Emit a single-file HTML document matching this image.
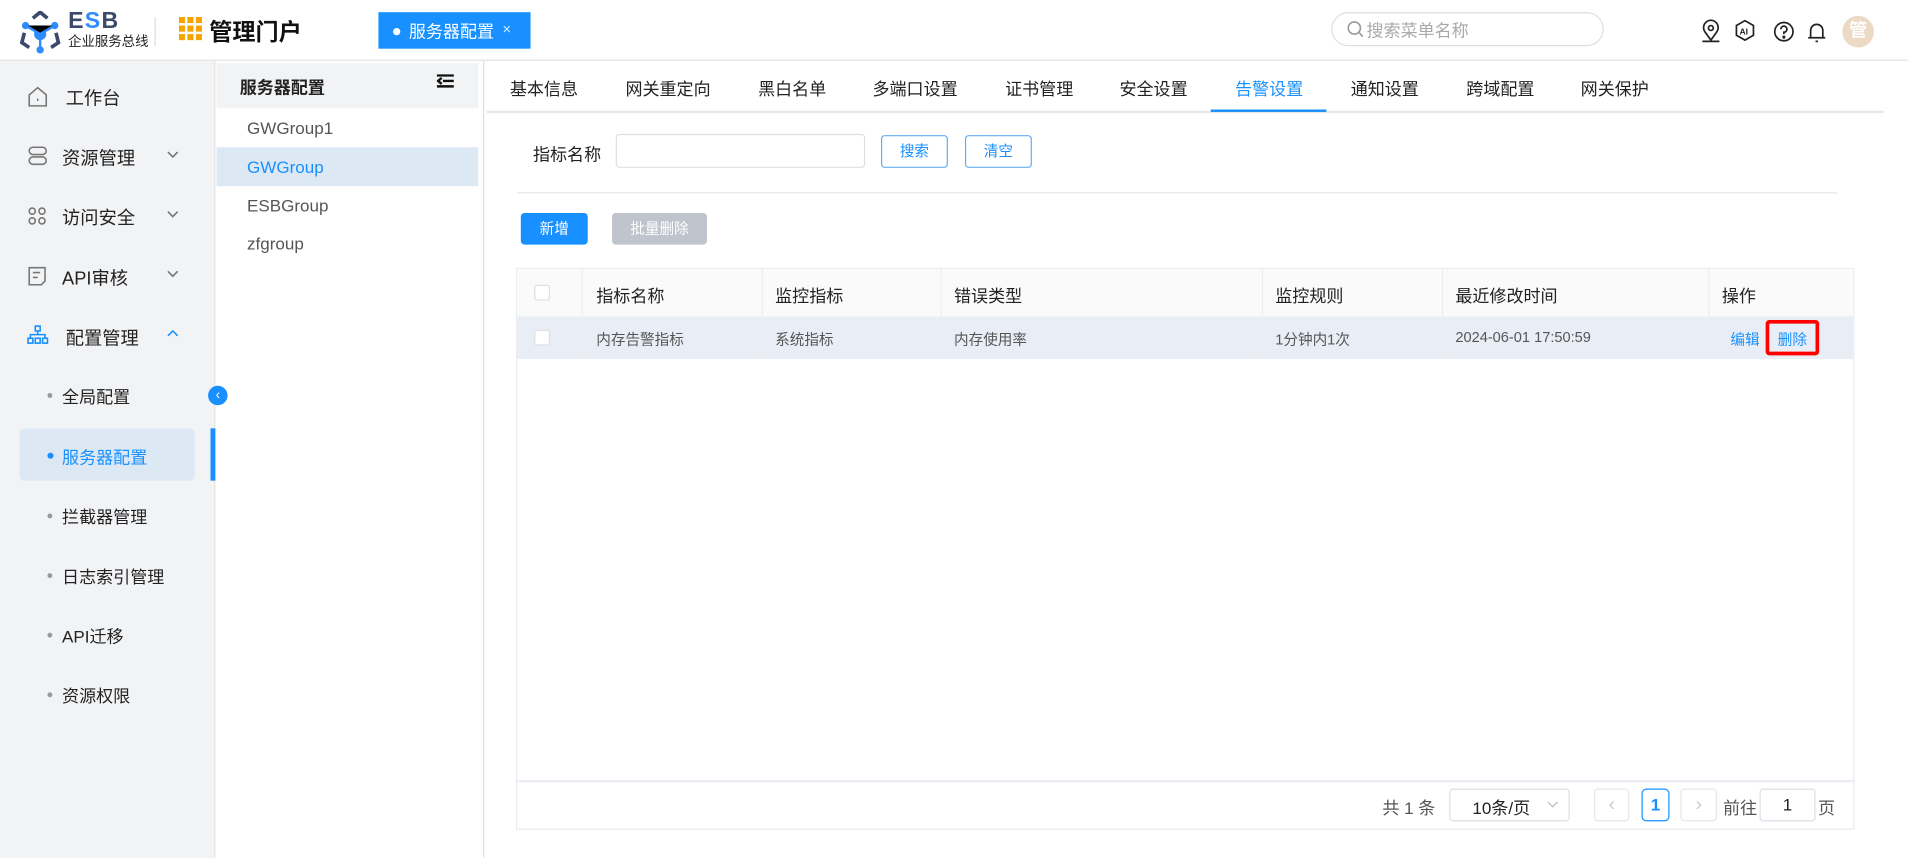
<!DOCTYPE html>
<html><head><meta charset="utf-8"><style>
*{box-sizing:border-box;margin:0;padding:0}
html,body{width:1908px;height:858px;overflow:hidden;background:#fff}
body{font-family:"Liberation Sans","Noto Sans CJK SC",sans-serif;color:#222}
#w{position:absolute;left:0;top:0;width:1568px;height:705px;transform:scale(1.216837);transform-origin:0 0;background:#fff}
.a{position:absolute}
.t{position:absolute;white-space:nowrap;font-size:14px}
</style></head><body><div id="w">
<!-- header -->
<div class="a" style="left:0;top:0;width:1568px;height:50px;border-bottom:1px solid #e2e2e2;background:#fff"></div>
<svg class="a" style="left:16px;top:9px" width="34" height="36" viewBox="0 0 34 36">
<path d="M11 6 L17 1 L23 6" fill="none" stroke="#3b4a6b" stroke-width="3"/>
<path d="M4 18 L2 26 L8 30" fill="none" stroke="#3b4a6b" stroke-width="3"/>
<path d="M30 18 L32 26 L26 30" fill="none" stroke="#3b4a6b" stroke-width="3"/>
<circle cx="17" cy="19" r="5" fill="#2f8cff"/><circle cx="5" cy="12" r="3" fill="#2f8cff"/><circle cx="29" cy="12" r="3" fill="#2f8cff"/><circle cx="17" cy="32" r="3" fill="#2f8cff"/>
<path d="M5 12 L17 19 L29 12 M17 19 L17 32" stroke="#2f8cff" stroke-width="2"/></svg>
<div class="t" style="left:56px;top:7px;font-size:19px;font-weight:bold;color:#3b4a6b;letter-spacing:1px">E<span style="color:#2f8cff">S</span>B</div>
<div class="t" style="left:56px;top:26px;font-size:11px;color:#222">企业服务总线</div>
<div class="a" style="left:127px;top:14px;width:1px;height:24px;background:#ddd"></div>
<svg class="a" style="left:147px;top:14px" width="20" height="20"><g fill="#f4a300"><rect x="0" y="0" width="5" height="5"/><rect x="7" y="0" width="5" height="5"/><rect x="14" y="0" width="5" height="5"/><rect x="0" y="7" width="5" height="5"/><rect x="7" y="7" width="5" height="5"/><rect x="14" y="7" width="5" height="5"/><rect x="0" y="14" width="5" height="5"/><rect x="7" y="14" width="5" height="5"/><rect x="14" y="14" width="5" height="5"/></g></svg>
<div class="t" style="left:172px;top:12px;font-size:19px;font-weight:bold;color:#111">管理门户</div>
<div class="a" style="left:311px;top:10px;width:125px;height:30px;background:#1890ff"></div>
<div class="a" style="left:323px;top:23px;width:6px;height:6px;border-radius:50%;background:#fff"></div>
<div class="t" style="left:336px;top:16px;color:#fff">服务器配置</div>
<div class="t" style="left:413px;top:17px;color:#dfefff;font-size:12px">×</div>
<div class="a" style="left:1094px;top:10px;width:224px;height:28px;border:1px solid #dcdfe6;border-radius:14px"></div>
<svg class="a" style="left:1107px;top:17px" width="14" height="14"><circle cx="6" cy="6" r="5" fill="none" stroke="#999" stroke-width="1.3"/><path d="M10 10 L13 13" stroke="#999" stroke-width="1.3"/></svg>
<div class="t" style="left:1123px;top:15px;color:#aaa">搜索菜单名称</div>
<svg class="a" style="left:1397px;top:16px" width="110" height="20" fill="none" stroke="#222" stroke-width="1.4">
<path d="M9 17 L4 10 A6 6 0 1 1 14 10 Z"/><circle cx="9" cy="7" r="2"/><path d="M2 18 H16"/>
<path d="M37 1 L44 5 V13 L37 17 L30 13 V5 Z"/><text x="32.5" y="12.5" font-size="7" fill="#222" stroke="none" font-weight="bold" font-family="Liberation Sans">AI</text>
<circle cx="69" cy="10" r="7.5"/><path d="M66.5 8 A2.5 2.5 0 1 1 69 10.5 V12"/><circle cx="69" cy="14.5" r=".6" fill="#222"/>
<path d="M91 15 V9 A5 5 0 0 1 101 9 V15 Z M89 15 H103 M95 18 H97"/></svg>
<div class="a" style="left:1514px;top:13px;width:26px;height:26px;border-radius:50%;background:#ecd9c6;color:#fff;font-size:15px;text-align:center;line-height:26px;font-weight:bold">管</div>
<!-- sidebar -->
<div class="a" style="left:0;top:50px;width:177px;height:655px;background:#f2f3f5;border-right:1px solid #e4e4e4"></div>
<svg class="a" style="left:22px;top:70px" width="140" height="220" fill="none" stroke="#777" stroke-width="1.3">
<path d="M2 8 L9 2 L16 8 V17 H2 Z M9 11 V13"/>
<rect x="2" y="51" width="14" height="6" rx="3"/><rect x="2" y="59" width="14" height="6" rx="3"/>
<circle cx="4.5" cy="103.5" r="2.5"/><circle cx="12.5" cy="103.5" r="2.5"/><circle cx="4.5" cy="111.5" r="2.5"/><circle cx="12.5" cy="111.5" r="2.5"/>
<path d="M2 150 H15 V161 L12 164 H2 Z M5 154 H11 M5 158 H9"/>
<path d="M116 55 L120 59 L124 55 M116 104 L120 108 L124 104 M116 153 L120 157 L124 153"/>
<g stroke="#1890ff"><rect x="7" y="198" width="4" height="4"/><rect x="1" y="208" width="4" height="4"/><rect x="7" y="208" width="4" height="4"/><rect x="13" y="208" width="4" height="4"/><path d="M9 202 V205 M3 208 V205 H15 V208"/><path d="M116 206 L120 202 L124 206"/></g></svg>
<div class="t" style="left:54px;top:70px;font-size:15px">工作台</div>
<div class="t" style="left:51px;top:119px;font-size:15px">资源管理</div>
<div class="t" style="left:51px;top:168px;font-size:15px">访问安全</div>
<div class="t" style="left:51px;top:218px;font-size:15px">API审核</div>
<div class="t" style="left:54px;top:267px;font-size:15px">配置管理</div>
<div class="a" style="left:16px;top:352px;width:144px;height:43px;background:#dde8f5;border-radius:4px"></div>
<div class="a" style="left:173px;top:352px;width:4px;height:43px;background:#1890ff"></div>
<div class="a" style="left:171px;top:317px;width:16px;height:16px;border-radius:50%;background:#1890ff;color:#fff;font-size:11px;line-height:16px;text-align:center">‹</div>
<div class="a" style="left:39px;top:323px;width:4px;height:4px;border-radius:50%;background:#999"></div>
<div class="a" style="left:39px;top:372px;width:5px;height:5px;border-radius:50%;background:#1890ff"></div>
<div class="a" style="left:39px;top:422px;width:4px;height:4px;border-radius:50%;background:#999"></div>
<div class="a" style="left:39px;top:471px;width:4px;height:4px;border-radius:50%;background:#999"></div>
<div class="a" style="left:39px;top:520px;width:4px;height:4px;border-radius:50%;background:#999"></div>
<div class="a" style="left:39px;top:569px;width:4px;height:4px;border-radius:50%;background:#999"></div>
<div class="t" style="left:51px;top:316px">全局配置</div>
<div class="t" style="left:51px;top:366px;color:#1890ff">服务器配置</div>
<div class="t" style="left:51px;top:415px">拦截器管理</div>
<div class="t" style="left:51px;top:464px">日志索引管理</div>
<div class="t" style="left:51px;top:513px">API迁移</div>
<div class="t" style="left:51px;top:562px">资源权限</div>
<!-- second panel -->
<div class="a" style="left:178px;top:50px;width:220px;height:655px;border-right:1px solid #e0e0e0"></div>
<div class="a" style="left:178px;top:52px;width:215px;height:37px;background:#f2f3f5"></div>
<div class="t" style="left:197px;top:62px;font-weight:bold">服务器配置</div>
<svg class="a" style="left:359px;top:61px" width="14" height="12"><path d="M0 1H14M5 5.5H14M0 10H14M4 3L1 5.5L4 8" stroke="#111" stroke-width="2" fill="none"/></svg>
<div class="a" style="left:178px;top:121px;width:215px;height:32px;background:#dde8f5"></div>
<div class="t" style="left:203px;top:97px;color:#555">GWGroup1</div>
<div class="t" style="left:203px;top:129px;color:#1890ff">GWGroup</div>
<div class="t" style="left:203px;top:161px;color:#555">ESBGroup</div>
<div class="t" style="left:203px;top:192px;color:#555">zfgroup</div>
<!-- tabs -->
<div class="a" style="left:400px;top:91px;width:1148px;height:2px;background:#e4e7ed"></div>
<div class="a" style="left:995px;top:90px;width:95px;height:2px;background:#1890ff"></div>
<div class="t" style="left:419px;top:63px">基本信息</div>
<div class="t" style="left:514px;top:63px">网关重定向</div>
<div class="t" style="left:623px;top:63px">黑白名单</div>
<div class="t" style="left:717px;top:63px">多端口设置</div>
<div class="t" style="left:826px;top:63px">证书管理</div>
<div class="t" style="left:920px;top:63px">安全设置</div>
<div class="t" style="left:1015px;top:63px;color:#1890ff">告警设置</div>
<div class="t" style="left:1110px;top:63px">通知设置</div>
<div class="t" style="left:1205px;top:63px">跨域配置</div>
<div class="t" style="left:1299px;top:63px">网关保护</div>
<!-- search -->
<div class="t" style="left:438px;top:117px">指标名称</div>
<div class="a" style="left:506px;top:110px;width:205px;height:28px;border:1px solid #dcdfe6;border-radius:3px"></div>
<div class="a" style="left:724px;top:111px;width:55px;height:27px;border:1px solid #66acf5;border-radius:3px;color:#1890ff;font-size:12px;text-align:center;line-height:25px">搜索</div>
<div class="a" style="left:793px;top:111px;width:55px;height:27px;border:1px solid #66acf5;border-radius:3px;color:#1890ff;font-size:12px;text-align:center;line-height:25px">清空</div>
<div class="a" style="left:425px;top:158px;width:1085px;height:1px;background:#e4e7ed"></div>
<div class="a" style="left:428px;top:175px;width:55px;height:26px;background:#1890ff;border-radius:3px;color:#fff;font-size:12px;text-align:center;line-height:26px">新增</div>
<div class="a" style="left:503px;top:175px;width:78px;height:26px;background:#c0c4cc;border-radius:3px;color:#fff;font-size:12px;text-align:center;line-height:26px">批量删除</div>
<!-- table -->
<div class="a" style="left:424px;top:220px;width:1100px;height:462px;border:1px solid #e9ecf1"></div>
<div class="a" style="left:425px;top:221px;width:1098px;height:39px;background:#fafafa"></div>
<div class="a" style="left:425px;top:260px;width:1098px;height:35px;background:#e9eef6"></div>
<div class="a" style="left:478px;top:221px;width:1px;height:74px;background:#eceef2"></div>
<div class="a" style="left:626px;top:221px;width:1px;height:74px;background:#eceef2"></div>
<div class="a" style="left:773px;top:221px;width:1px;height:74px;background:#eceef2"></div>
<div class="a" style="left:1037px;top:221px;width:1px;height:74px;background:#eceef2"></div>
<div class="a" style="left:1185px;top:221px;width:1px;height:74px;background:#eceef2"></div>
<div class="a" style="left:1404px;top:221px;width:1px;height:74px;background:#eceef2"></div>
<div class="a" style="left:439px;top:234px;width:13px;height:13px;border:1px solid #dcdfe6;border-radius:2px;background:#fff"></div>
<div class="a" style="left:439px;top:271px;width:13px;height:13px;border:1px solid #dcdfe6;border-radius:2px;background:#fff"></div>
<div class="t" style="left:490px;top:233px">指标名称</div>
<div class="t" style="left:637px;top:233px">监控指标</div>
<div class="t" style="left:784px;top:233px">错误类型</div>
<div class="t" style="left:1048px;top:233px">监控规则</div>
<div class="t" style="left:1196px;top:233px">最近修改时间</div>
<div class="t" style="left:1415px;top:233px">操作</div>
<div class="t" style="left:490px;top:270px;font-size:12px;color:#555">内存告警指标</div>
<div class="t" style="left:637px;top:270px;font-size:12px;color:#555">系统指标</div>
<div class="t" style="left:784px;top:270px;font-size:12px;color:#555">内存使用率</div>
<div class="t" style="left:1048px;top:270px;font-size:12px;color:#555">1分钟内1次</div>
<div class="t" style="left:1196px;top:270px;font-size:12px;color:#555">2024-06-01 17:50:59</div>
<div class="t" style="left:1422px;top:270px;font-size:12px;color:#1890ff">编辑</div>
<div class="a" style="left:1451px;top:263px;width:44px;height:29px;border:3px solid #f00;border-radius:3px"></div>
<div class="t" style="left:1461px;top:270px;font-size:12px;color:#1890ff">删除</div>
<div class="a" style="left:425px;top:641px;width:1098px;height:2px;background:#eceef3"></div>
<div class="t" style="left:1136px;top:654px;color:#555">共 1 条</div>
<div class="a" style="left:1191px;top:648px;width:99px;height:27px;border:1px solid #dcdfe6;border-radius:3px"></div>
<div class="t" style="left:1210px;top:654px">10条/页</div>
<svg class="a" style="left:1271px;top:658px" width="10" height="6"><path d="M1 1L5 5L9 1" stroke="#bbb" fill="none"/></svg>
<div class="a" style="left:1310px;top:648px;width:29px;height:27px;border:1px solid #e4e7ed;border-radius:3px;color:#ccc;text-align:center;line-height:25px">‹</div>
<div class="a" style="left:1349px;top:648px;width:23px;height:27px;border:1px solid #1890ff;border-radius:4px;color:#1890ff;text-align:center;line-height:25px;font-weight:bold;font-size:14px">1</div>
<div class="a" style="left:1381px;top:648px;width:30px;height:27px;border:1px solid #e4e7ed;border-radius:3px;color:#ccc;text-align:center;line-height:25px">›</div>
<div class="t" style="left:1416px;top:654px;color:#555">前往</div>
<div class="a" style="left:1446px;top:648px;width:46px;height:27px;border:1px solid #dcdfe6;border-radius:3px;text-align:center;line-height:25px;font-size:14px">1</div>
<div class="t" style="left:1494px;top:654px;color:#555">页</div>
</div></body></html>
